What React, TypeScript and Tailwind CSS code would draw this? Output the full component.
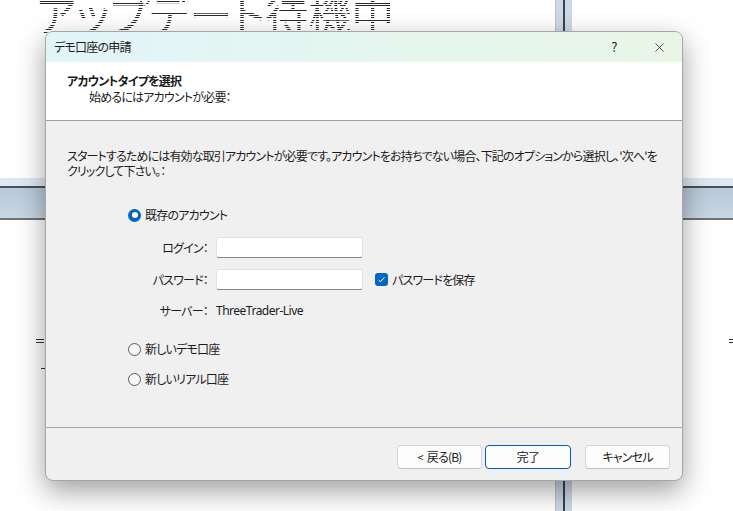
import { X } from "lucide-react";

const jp = "[font-family:'Noto_Sans_CJK_JP','Noto_Sans',sans-serif] [font-feature-settings:'palt']";

const Radio = ({ checked, label }: { checked?: boolean; label: string }) => (
  <div className="flex h-4 items-center gap-[4px]">
    {checked ? (
      <span className="flex h-[13px] w-[13px] items-center justify-center rounded-full bg-[#0067c0]">
        <span className="h-[6px] w-[6px] rounded-full bg-white" />
      </span>
    ) : (
      <span className="h-[13px] w-[13px] rounded-full border border-[#5a5a5a] bg-[#f7f7f7]" />
    )}
    <span>{label}</span>
  </div>
);

const Field = ({ label }: { label: string }) => (
  <div className="flex items-center">
    <span className="w-[88px] pr-[8px] text-right">{label}</span>
    <div className="h-[21px] w-[147px] rounded-[3px] border border-[#e2e2e2] border-b-[#868686] bg-white" />
  </div>
);

const Btn = ({ children, primary }: { children: React.ReactNode; primary?: boolean }) => (
  <button
    className={
      primary
        ? "h-[24px] w-[86px] rounded-[4px] border border-[#005fb8] bg-[#fdfdfd] text-[12px] text-[#1a1a1a]"
        : "h-[24px] w-[85px] rounded-[4px] border border-[#d4d4d4] border-b-[#c0c0c0] bg-[#fdfdfd] text-[12px] text-[#1a1a1a]"
    }
  >
    {children}
  </button>
);

export default function App() {
  return (
    <div className={`relative h-[511px] w-[733px] overflow-hidden bg-white text-[12px] tracking-[-0.8px] text-[#1b1b1b] ${jp}`}>
      {/* background app */}
      <div className="absolute left-[36px] top-[-9px] whitespace-nowrap bg-[repeating-linear-gradient(to_bottom,#2a2a2a_0px,#2a2a2a_1px,transparent_1px,transparent_2.4px)] bg-clip-text text-[43px] leading-[44px] tracking-normal text-transparent [font-family:'Noto_Sans_CJK_JP',sans-serif]">
        アップデート待機中
      </div>
      <div className="absolute left-[555px] top-0 flex h-full">
        <div className="w-[8px] border-l border-[#b8c2cc] bg-[#cdd9e6]" />
        <div className="w-[2px] bg-[#3c4148]" />
        <div className="w-[7px] bg-[#cdd9e6]" />
      </div>
      <div className="absolute left-0 top-[178px] flex w-full flex-col">
        <div className="h-[8px] bg-[#dfe8f2]" />
        <div className="h-[2px] bg-[#4a5058]" />
        <div className="h-[30px] bg-[linear-gradient(to_bottom,#b9c9d9,#c9d6e3)]" />
        <div className="h-[2px] bg-[#6e7276]" />
      </div>
      <div className="absolute left-[36px] top-[339px] h-[1px] w-[8px] bg-[#333]" />
      <div className="absolute left-[36px] top-[342px] h-[1px] w-[8px] bg-[#333]" />
      <div className="absolute left-[41px] top-[368px] h-[1px] w-[4px] bg-[#333]" />
      <div className="absolute left-[729px] top-[339px] h-[1px] w-[4px] bg-[#333]" />
      <div className="absolute left-[729px] top-[342px] h-[1px] w-[4px] bg-[#333]" />

      {/* dialog */}
      <div className="absolute left-[45px] top-[31px] flex h-[450px] w-[638px] flex-col overflow-hidden rounded-[8px] border border-[#a6a6a6] bg-[#f0f0f0] shadow-[0_10px_28px_rgba(0,0,0,0.38)]">
        <div className="flex h-[30px] shrink-0 items-center bg-[linear-gradient(to_right,#e1f4f8,#e9f6e6)] pl-[8px]">
          <span className="flex-1">デモ口座の申請</span>
          <span className="w-[20px] text-center text-[13px]">?</span>
          <span className="w-[12px]" />
          <span className="flex w-[46px] items-center justify-center">
            <X size={15} strokeWidth={1.2} />
          </span>
        </div>
        <div className="flex h-[59px] shrink-0 flex-col border-b border-[#a0a0a0] bg-white pl-[21px] pt-[11px]">
          <span className="font-bold leading-[16px]">アカウントタイプを選択</span>
          <span className="pl-[22px] leading-[16px]">始めるにはアカウントが必要：</span>
        </div>
        <div className="flex h-[307px] shrink-0 flex-col border-b border-[#a8a8a8] pl-[21px] pt-[27px]">
          <p className="whitespace-nowrap leading-[15px] tracking-[-0.85px]">
            スタートするためには有効な取引アカウントが必要です。アカウントをお持ちでない場合、下記のオプションから選択し、'次へ'を
            <br />
            クリックして下さい。：
          </p>
          <div className="ml-[61px] mt-[29px] flex flex-col">
            <Radio checked label="既存のアカウント" />
            <div className="mt-[14px]">
              <Field label="ログイン：" />
            </div>
            <div className="mt-[11px] flex items-center">
              <Field label="パスワード：" />
              <span className="ml-[12px] flex h-[13px] w-[13px] items-center justify-center rounded-[3px] bg-[#0067c0]">
                <svg width="9" height="9" viewBox="0 0 9 9" fill="none">
                  <path d="M1.5 4.8L3.5 6.8L7.5 2.3" stroke="white" strokeWidth="1" />
                </svg>
              </span>
              <span className="ml-[4px]">パスワードを保存</span>
            </div>
            <div className="mt-[13px] flex h-4 items-center">
              <span className="w-[88px] pr-[8px] text-right">サーバー：</span>
              <span className="tracking-[-0.5px] [font-family:'Noto_Sans',sans-serif]">ThreeTrader-Live</span>
            </div>
            <div className="mt-[22px]">
              <Radio label="新しいデモ口座" />
            </div>
            <div className="mt-[14px]">
              <Radio label="新しいリアル口座" />
            </div>
          </div>
        </div>
        <div className="flex flex-1 items-start justify-end pr-[12px] pt-[17px]">
          <Btn>
            <span className="mr-[4px] text-[11px]">&lt;</span>戻る(B)
          </Btn>
          <span className="w-[3px]" />
          <Btn primary>完了</Btn>
          <span className="w-[14px]" />
          <Btn>キャンセル</Btn>
        </div>
      </div>
    </div>
  );
}
